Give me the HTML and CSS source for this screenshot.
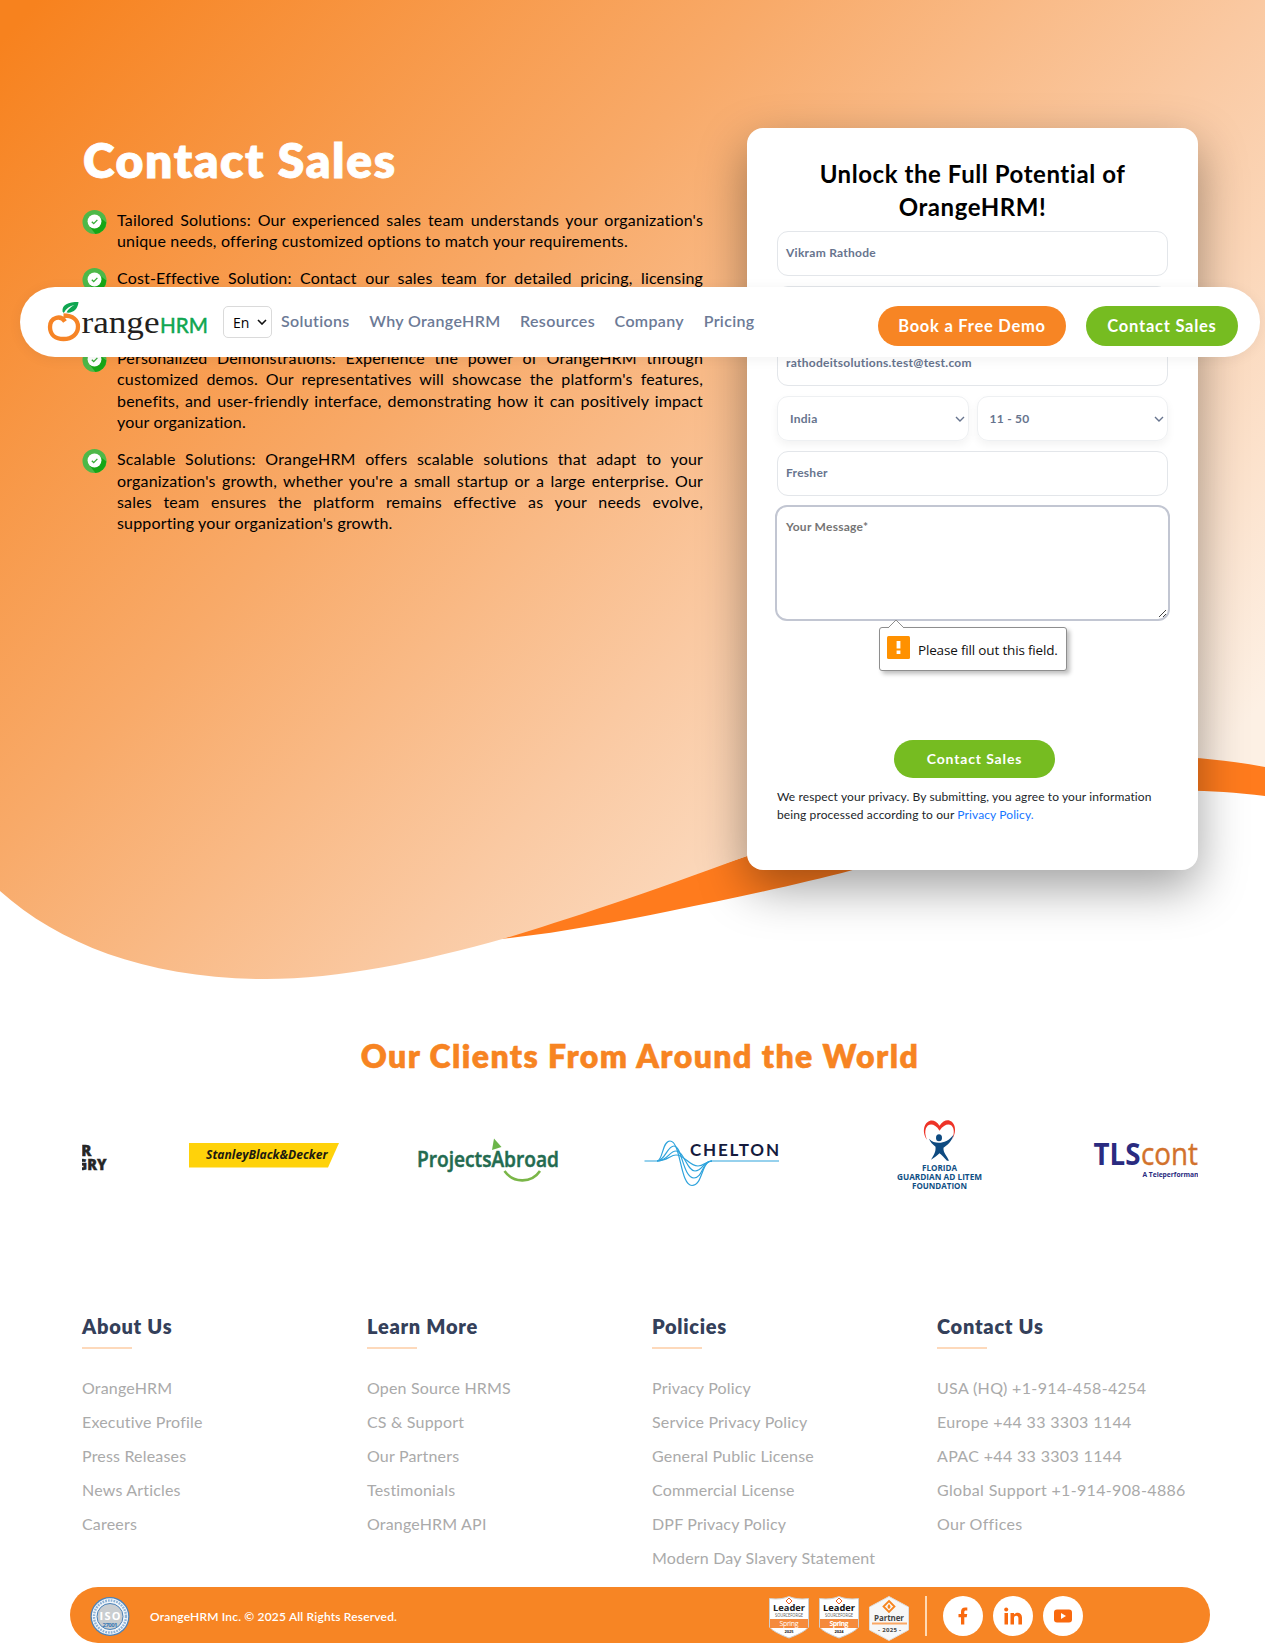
FILE: index.html
```html
<!DOCTYPE html>
<html lang="en">
<head>
<meta charset="utf-8">
<title>Contact Sales | OrangeHRM</title>
<link rel="stylesheet" href="styles.css">
</head>
<body>
<section class="hero">
  <svg class="hero-bg" viewBox="0 0 1265 985" aria-hidden="true">
    <defs>
      <linearGradient id="peach" gradientUnits="userSpaceOnUse" x1="0" y1="0" x2="1044" y2="945">
        <stop offset="0.02" stop-color="#f7821e"/><stop offset=".405" stop-color="#f8aa69"/>
        <stop offset=".666" stop-color="#fac9a2"/><stop offset="1" stop-color="#fdf0e4"/>
      </linearGradient>
    </defs>
    <path fill="#ff7b1d" d="M500 939C560 933 620 921 670 911C735 898 800 884 851 870.500C970 835 1080 772 1265 796V750H747V856Z"/>
    <path fill="url(#peach)" d="M0 0H1265V767C1100 736 960 776 747 856C650 892 560 922 506 938C420 962 340 979 266 979C150 979 60 945 0 891Z"/>
  </svg>
  <div class="hero-inner">
    <div class="pitch">
      <h1 class="pitch-title">Contact Sales</h1>
      <ul class="benefits">
        <li><svg class="tick" viewBox="0 0 26 26"><circle cx="13" cy="13" r="12.500" fill="#4db848"/><path d="M17 7L25.300 13.500A12.500 12.500 0 0 1 14 25.500L8 18Z" fill="#16a616"/><circle cx="13" cy="12.500" r="7.200" fill="#fff"/><path d="M10.200 12.700l2 2 3.800-3.900" fill="none" stroke="#35ad35" stroke-width="1.400"/></svg><p>Tailored Solutions: Our experienced sales team understands your organization's unique needs, offering customized options to match your requirements.</p></li>
        <li class="three-lines"><svg class="tick" viewBox="0 0 26 26"><circle cx="13" cy="13" r="12.500" fill="#4db848"/><path d="M17 7L25.300 13.500A12.500 12.500 0 0 1 14 25.500L8 18Z" fill="#16a616"/><circle cx="13" cy="12.500" r="7.200" fill="#fff"/><path d="M10.200 12.700l2 2 3.800-3.900" fill="none" stroke="#35ad35" stroke-width="1.400"/></svg><p>Cost-Effective Solution: Contact our sales team for detailed pricing, licensing</p></li>
        <li><svg class="tick" viewBox="0 0 26 26"><circle cx="13" cy="13" r="12.500" fill="#4db848"/><path d="M17 7L25.300 13.500A12.500 12.500 0 0 1 14 25.500L8 18Z" fill="#16a616"/><circle cx="13" cy="12.500" r="7.200" fill="#fff"/><path d="M10.200 12.700l2 2 3.800-3.900" fill="none" stroke="#35ad35" stroke-width="1.400"/></svg><p>Personalized Demonstrations: Experience the power of OrangeHRM through customized demos. Our representatives will showcase the platform's features, benefits, and user-friendly interface, demonstrating how it can positively impact your organization.</p></li>
        <li><svg class="tick" viewBox="0 0 26 26"><circle cx="13" cy="13" r="12.500" fill="#4db848"/><path d="M17 7L25.300 13.500A12.500 12.500 0 0 1 14 25.500L8 18Z" fill="#16a616"/><circle cx="13" cy="12.500" r="7.200" fill="#fff"/><path d="M10.200 12.700l2 2 3.800-3.900" fill="none" stroke="#35ad35" stroke-width="1.400"/></svg><p>Scalable Solutions: OrangeHRM offers scalable solutions that adapt to your organization's growth, whether you're a small startup or a large enterprise. Our sales team ensures the platform remains effective as your needs evolve, supporting your organization's growth.</p></li>
      </ul>
    </div>
    <form class="card">
      <h2 class="card-title">Unlock the Full Potential of<br>OrangeHRM!</h2>
      <div class="field"><span>Vikram Rathode</span></div>
      <div class="field"></div>
      <div class="field"><span>rathodeitsolutions.test@test.com</span></div>
      <div class="field-pair">
        <div class="field choice"><span>India</span><svg class="chev" viewBox="0 0 10 6"><path d="M1 1l4 4 4-4"/></svg></div>
        <div class="field choice"><span>11 - 50</span><svg class="chev" viewBox="0 0 10 6"><path d="M1 1l4 4 4-4"/></svg></div>
      </div>
      <div class="field"><span>Fresher</span></div>
      <div class="message"><span>Your Message*</span>
        <svg class="grip" viewBox="0 0 9 9"><path d="M1 8L8 1M5 8L8 5"/></svg>
        <div class="tip">
          <svg class="tip-arrow" viewBox="0 0 16 9"><path d="M0 9L8 1L16 9" fill="#fff" stroke="#8e8e8e"/></svg>
          <svg class="tip-icon" viewBox="0 0 23 23"><rect width="23" height="23" rx="1.500" fill="#ff9100"/><path d="M9.600 5h3.800v7.500H9.600zM9.600 14.500h3.800v3.500H9.600z" fill="#fff"/></svg>
          <span class="tip-text">Please fill out this field.</span>
        </div>
      </div>
      <button class="submit" type="button">Contact Sales</button>
      <p class="privacy">We respect your privacy. By submitting, you agree to your information<br>being processed according to our <a>Privacy Policy.</a></p>
    </form>
  </div>
</section>

<header class="nav">
  <svg class="brand" viewBox="0 0 162 42" role="img" aria-label="OrangeHRM">
    <path d="M18 20.500C13.500 13.500 3 16.500 3 26C3 34 9 38 16.500 38C25 38 31 33 31 25.500C31 19 26 14.500 16.500 14.500" fill="none" stroke="#f68426" stroke-width="4.300"/>
    <path d="M15.500 10.500C15 3.500 21 1 31.500 1C31 8 26 12.500 19.500 11.500C21 8.500 23.500 6 27.500 4C22.500 5 19 7.500 16.800 12Z" fill="#0fa651"/>
    <text x="34.500" y="31.800" class="brand-range" textLength="78" lengthAdjust="spacingAndGlyphs">range</text>
    <text x="113" y="31.800" class="brand-hrm" textLength="48" lengthAdjust="spacingAndGlyphs">HRM</text>
  </svg>
  <div class="lang"><span>En</span><svg class="chev dark" viewBox="0 0 10 6"><path d="M1 1l4 4 4-4"/></svg></div>
  <nav class="menu"><a>Solutions</a><a>Why OrangeHRM</a><a>Resources</a><a>Company</a><a>Pricing</a></nav>
  <div class="actions"><a class="pill orange">Book a Free Demo</a><a class="pill green">Contact Sales</a></div>
</header>

<section class="clients">
  <h2 class="clients-title">Our Clients From Around the World</h2>
  <svg class="logos" viewBox="82 1110 1116 90">
    <g fill="#262626" stroke="#262626" stroke-width=".4" font-family="Open Sans, sans-serif" font-weight="800" font-size="15">
      <text x="91.500" y="1156" text-anchor="end">FOR</text><text x="106.500" y="1170" text-anchor="end" textLength="64" lengthAdjust="spacingAndGlyphs">HUNGRY</text>
    </g>
    <path d="M189 1143H339L328 1167.500H189Z" fill="#ffd20a"/>
    <text x="206" y="1159" font-family="Open Sans, sans-serif" font-weight="700" font-style="italic" font-size="13" fill="#1d1a10" textLength="121.500" lengthAdjust="spacingAndGlyphs">StanleyBlack&amp;Decker</text>
    <text x="417" y="1167" font-family="Open Sans, sans-serif" font-weight="600" font-size="21.500" fill="#236b50" stroke="#236b50" stroke-width=".5" textLength="142" lengthAdjust="spacingAndGlyphs">ProjectsAbroad</text>
    <path d="M494 1138.500L501.500 1147L492 1150Z" fill="#6cb54a"/>
    <path d="M504.500 1171C513 1183 531 1184 540 1171" fill="none" stroke="#7ab648" stroke-width="2.600"/>
    <g fill="none" stroke="#2ea3dc" stroke-width="1.200">
      <path d="M644.500 1161H657C663 1161 662 1141 670 1141C681 1141 680 1185.500 692 1185.500C703 1185.500 701 1161 712 1161H779"/>
      <path d="M657 1161C665 1161 667 1146 674 1146C682 1146 683 1178 694 1178C703 1178 702 1161 712 1161"/>
      <path d="M657 1161C668 1161 669 1151 676 1151C684 1151 687 1171 695 1171C703 1171 703 1161 712 1161"/>
      <path d="M657 1161C668 1161 670 1155 676 1155C685 1155 689 1166 698 1166C704 1166 706 1161 712 1161"/>
    </g>
    <text x="690" y="1155.500" font-family="Lato, sans-serif" font-weight="700" font-size="17" fill="#151b3d" textLength="89">CHELTON</text>
    <g transform="translate(0 .7)">
      <path d="M927 1139C918 1126 931 1112 939.500 1125C948 1112 961 1124 952 1139C958 1125 948 1118 939.500 1130C932 1118 921 1125 927 1139Z" fill="#ee3327"/>
      <ellipse cx="939" cy="1137" rx="3" ry="3.500" fill="#0e4a80"/>
      <path d="M929 1138C932 1141 935 1142 939 1142C944 1142 949 1140 953.500 1134C952 1140 948 1144 943.500 1147C943 1152 947 1155 949 1160H947C944 1157 942 1154 939.500 1152.500C937 1155 934 1157 931 1159C934 1154 936 1151 935.500 1146C933 1144 930 1141 929 1138Z" fill="#0e4a80"/>
    </g>
    <g fill="#0f4f84" font-family="Open Sans, sans-serif" font-weight="700" font-size="9">
      <text x="922" y="1170.500" textLength="35" lengthAdjust="spacingAndGlyphs">FLORIDA</text>
      <text x="897" y="1179.500" textLength="85" lengthAdjust="spacingAndGlyphs">GUARDIAN AD LITEM</text>
      <text x="912" y="1188.500" textLength="55" lengthAdjust="spacingAndGlyphs">FOUNDATION</text>
    </g>
    <text x="1093.500" y="1165" font-family="Open Sans, sans-serif" font-weight="700" font-size="31" fill="#2a2b80" textLength="47" lengthAdjust="spacingAndGlyphs">TLS</text>
    <text x="1141" y="1165" font-family="Open Sans, sans-serif" font-weight="400" font-size="31" fill="#d2722c" stroke="#d2722c" stroke-width=".4" textLength="57" lengthAdjust="spacingAndGlyphs">cont</text>
    <text x="1142.500" y="1177" font-family="Open Sans, sans-serif" font-weight="700" font-size="6.800" fill="#2a2b80" textLength="56" lengthAdjust="spacingAndGlyphs">A Teleperforman</text>
  </svg>
</section>

<footer class="footer">
  <div class="cols">
    <div class="col"><h3>About Us</h3><a>OrangeHRM</a><a>Executive Profile</a><a>Press Releases</a><a>News Articles</a><a>Careers</a></div>
    <div class="col"><h3>Learn More</h3><a>Open Source HRMS</a><a>CS &amp; Support</a><a>Our Partners</a><a>Testimonials</a><a>OrangeHRM API</a></div>
    <div class="col"><h3>Policies</h3><a>Privacy Policy</a><a>Service Privacy Policy</a><a>General Public License</a><a>Commercial License</a><a>DPF Privacy Policy</a><a>Modern Day Slavery Statement</a></div>
    <div class="col phones"><h3>Contact Us</h3><a>USA (HQ) +1-914-458-4254</a><a>Europe +44 33 3303 1144</a><a>APAC +44 33 3303 1144</a><a>Global Support +1-914-908-4886</a><a>Our Offices</a></div>
  </div>
  <div class="legal">
    <svg class="iso" viewBox="0 0 40 41"><circle cx="20" cy="20.500" r="19.500" fill="#4a83bb"/><circle cx="20" cy="20.500" r="18.200" fill="#f2f6fa"/><circle cx="20" cy="20.500" r="16" fill="none" stroke="#8fb3d6" stroke-width="2.400" stroke-dasharray="1.800 1"/><circle cx="20" cy="20.500" r="13" fill="#c9cdd0" stroke="#4a83bb"/><text x="9.500" y="23.500" font-size="11" font-weight="700" fill="#fff" textLength="21">ISO</text><text x="12.500" y="31" font-size="6" font-weight="700" fill="#3c79b5" textLength="15">27001</text></svg>
    <span class="copy">OrangeHRM Inc. © 2025 All Rights Reserved.</span>
    <div class="badges">
      <svg viewBox="0 0 40 45"><path d="M.5 2.500Q12 4 20 .5Q28 4 39.500 2.500V31Q36 36 20 42Q4 36 .5 31Z" fill="#fff" stroke="#cfcfcf"/><path d="M1 23H39V32H1Z" fill="#f58a3c"/><path d="M20 2l3 3-3 3-3-3z" fill="none" stroke="#f26322"/><text x="4" y="15" font-size="9" font-weight="700" fill="#222" textLength="32" lengthAdjust="spacingAndGlyphs">Leader</text><text x="6" y="21" font-size="4.500" fill="#555" textLength="28" lengthAdjust="spacingAndGlyphs">SOURCEFORGE</text><text x="10.500" y="30" font-size="7" fill="#fff" textLength="19">Spring</text><text x="15.500" y="37" font-size="4" font-weight="700" fill="#222">2025</text></svg>
      <svg viewBox="0 0 40 45"><path d="M.5 2.500Q12 4 20 .5Q28 4 39.500 2.500V31Q36 36 20 42Q4 36 .5 31Z" fill="#fff" stroke="#cfcfcf"/><path d="M1 23H39V32H1Z" fill="#f58a3c"/><path d="M20 2l3 3-3 3-3-3z" fill="none" stroke="#f26322"/><text x="4" y="15" font-size="9" font-weight="700" fill="#111" textLength="32" lengthAdjust="spacingAndGlyphs">Leader</text><text x="6" y="21" font-size="4.500" fill="#555" textLength="28" lengthAdjust="spacingAndGlyphs">SOURCEFORGE</text><text x="10.500" y="30" font-size="7" font-weight="700" fill="#fff" textLength="19">Spring</text><text x="15.500" y="37" font-size="4" font-weight="700" fill="#111">2024</text></svg>
      <svg viewBox="0 0 40 45"><path d="M20 .5L39.500 11V34L20 44.500L.5 34V11Z" fill="#f7f7f7" stroke="#ddd"/><path d="M20 5l5.500 5.500-5.500 5.500-5.500-5.500z" fill="none" stroke="#f7851f" stroke-width="1.800"/><path d="M20 8q3 3 0 5q-3-2 0-5" fill="#f7851f"/><path d="M3 27.500H38" stroke="#fba864" stroke-width="2"/><text x="5" y="25" font-size="8" font-weight="700" fill="#444" textLength="30">Partner</text><text x="9" y="36" font-size="6" font-weight="700" fill="#444" textLength="23">- 2025 -</text></svg>
    </div>
    <i class="rule"></i>
    <div class="social">
      <svg viewBox="0 0 40 40"><circle cx="20" cy="20" r="20" fill="#fff"/><path d="M18 28.500V21.300H15.500V18H18V15.800C18 13 19.600 11.500 22.200 11.500H24.300V14.600H22.800C21.700 14.600 21.300 15.200 21.300 16.200V18H24.200L23.700 21.300H21.300V28.500Z" fill="#f9690e"/></svg>
      <svg viewBox="0 0 40 40"><circle cx="20" cy="20" r="20" fill="#fff"/><path d="M11.500 17H15V28.500H11.500ZM17.500 17H21V18.600C23.500 15.500 29 16.500 29 21.500V28.500H25.400V22.200C25.400 19 21 19 21 22.200V28.500H17.500Z" fill="#f9690e"/><circle cx="13.200" cy="13.500" r="2" fill="#f9690e"/></svg>
      <svg viewBox="0 0 40 40"><circle cx="20" cy="20" r="20" fill="#fff"/><rect x="11" y="13.500" width="18" height="13" rx="3" fill="#f9690e"/><path d="M18 17l5 3-5 3z" fill="#fff"/></svg>
    </div>
  </div>
</footer>
</body>
</html>
```
FILE: styles.css
```css
* { box-sizing: border-box; }
body { margin: 0; width: 1265px; height: 1650px; position: relative; overflow: hidden; background: #fff; font-family: Lato, "Open Sans", sans-serif; color: #000; }
h1, h2, h3, p, ul { margin: 0; padding: 0; }
.hero { position: relative; height: 985px; padding: 128px 67px 0 82px; }
.hero-bg { position: absolute; inset: 0; width: 1265px; height: 985px; }
.hero-inner { position: relative; display: flex; justify-content: space-between; }
.pitch { width: 621px; padding-top: 3px; }
.pitch-title { color: #fff; font-size: 48px; line-height: 58px; font-weight: 800; letter-spacing: 1.6px; padding-left: 1px; -webkit-text-stroke: .8px #fff; }
.benefits { list-style: none; margin-top: 19.500px; }
.benefits li { display: flex; gap: 10px; margin-bottom: 16px; }
.benefits p { width: 586px; font-size: 16px; line-height: 21.300px; letter-spacing: .17px; text-align: justify; }
.three-lines { height: 64px; }
.three-lines p { text-align-last: justify; }
.tick { flex: none; width: 25px; height: 26px; }
.card { width: 451px; height: 742px; padding: 29px 30px 0; background: #fff; border-radius: 16px; box-shadow: 0 18px 48px rgba(0, 0, 0, .37); }
.card-title { text-align: center; font-size: 24px; line-height: 33px; font-weight: 700; letter-spacing: .56px; margin-bottom: 8px; }
.field { display: flex; align-items: center; height: 45px; margin-bottom: 10px; padding: 0 9px 2px 8px; border: 1px solid #e3e6ea; border-radius: 11px; font-size: 12px; font-weight: 700; letter-spacing: .27px; color: #67748e; }
.field-pair { display: grid; grid-template-columns: 1fr 1fr; gap: 8px; }
.choice { justify-content: space-between; padding: 0 3px 0 12px; border-color: #eef0f2; box-shadow: 0 4px 8px rgba(0, 0, 0, .05); }
.chev { width: 10px; height: 6px; fill: none; stroke: #67748e; stroke-width: 1.400; }
.chev.dark { stroke: #111; stroke-width: 1.600; }
.message { position: relative; width: 395px; height: 116px; margin: -1px -2px 0; padding: 12px 9px; border: 2px solid #c2c6d2; border-radius: 12px; font-size: 12px; font-weight: 700; letter-spacing: .27px; line-height: 16px; color: #757575; }
.grip { position: absolute; right: 1px; bottom: 1px; width: 9px; height: 9px; stroke: #444; fill: none; }
.tip { position: absolute; left: 102px; top: 120px; width: 188px; height: 44px; display: flex; align-items: center; gap: 8px; padding: 0 7px; background: #fff; border: 1px solid #8e8e8e; border-radius: 3px; box-shadow: 3px 3px 4px rgba(0, 0, 0, .25); }
.tip-arrow { position: absolute; left: 8px; top: -9px; width: 16px; height: 9px; }
.tip-icon { flex: none; width: 23px; height: 23px; margin-top: -4px; }
.tip-text { font: 13.500px/20px "Open Sans", sans-serif; letter-spacing: -.17px; color: #111; white-space: nowrap; padding-top: 2px; }
.submit { display: flex; align-items: center; justify-content: center; width: 161px; height: 38px; margin: 119px 0 0 117px; padding: 0 0 2px; border: 0; border-radius: 19px; background: #76bc21; color: #fff; font: 700 14px Lato, sans-serif; letter-spacing: .85px; }
.privacy { margin-top: 10px; font-size: 12px; line-height: 18px; letter-spacing: .11px; color: #212529; white-space: nowrap; }
.privacy a { color: #1676ff; }
.nav { position: absolute; left: 20px; top: 287px; width: 1240px; height: 70px; display: flex; align-items: flex-start; padding: 0 22px 0 27px; background: #fff; border-radius: 35px; box-shadow: 0 2px 14px rgba(0, 0, 0, .06); }
.brand { width: 162px; height: 42px; margin-top: 14px; overflow: visible; }
.brand-range { font: 400 32px "Liberation Serif", serif; fill: #231f20; }
.brand-hrm { font: 400 22px Lato, sans-serif; fill: #0fa651; stroke: #0fa651; stroke-width: .5; }
.lang { display: flex; align-items: center; justify-content: space-between; width: 49px; height: 32px; margin: 19px 9px 0 14px; padding: 0 4px 0 9px; border: 1px solid #dadada; border-radius: 5px; font: 14px "Open Sans", sans-serif; }
.menu { display: flex; gap: 19.600px; margin-top: 24px; font-size: 16px; line-height: 20px; font-weight: 600; letter-spacing: .34px; color: #6c7a96; white-space: nowrap; }
.actions { display: flex; gap: 20px; margin: 19px 0 0 auto; }
.pill { display: flex; align-items: center; justify-content: center; height: 40px; border-radius: 20px; color: #fff; font-size: 16.500px; font-weight: 700; letter-spacing: .75px; }
.orange { width: 188px; background: #f78524; }
.green { width: 152px; background: #76bc21; }
.clients { padding: 51px 67px 0 82px; }
.clients-title { text-align: center; color: #f78422; font-size: 32px; line-height: 40px; font-weight: 800; letter-spacing: 1.43px; -webkit-text-stroke: .5px #f78422; }
.logos { display: block; width: 1116px; height: 90px; margin-top: 34px; }
.footer { padding: 113px 55px 0 70px; }
.cols { display: grid; grid-template-columns: repeat(4, 285px); padding-left: 12px; height: 273.500px; }
.col { display: flex; flex-direction: column; white-space: nowrap; }
.col h3 { font-size: 20px; line-height: 26px; font-weight: 800; letter-spacing: .72px; color: #34405a; margin-bottom: 22px; }
.col h3::after { content: ""; display: block; width: 50px; height: 2px; margin-top: 8px; background: #fdd9bb; }
.col a { font-size: 16px; line-height: 34px; letter-spacing: .18px; color: #aaa; }
.phones a { letter-spacing: .34px; }
.legal { display: flex; align-items: center; width: 1140px; height: 56.500px; padding: 3px 0 0 20px; border-radius: 28.500px; background: #f78524; }
.iso { width: 40px; height: 41px; }
.copy { margin-left: 20px; font-size: 12px; font-weight: 600; letter-spacing: .17px; color: #fff; }
.legal text { font-family: "Open Sans", sans-serif; }
.badges { display: flex; gap: 10px; margin: 4px 0 0 auto; }
.badges svg { width: 40px; height: 45px; }
.rule { width: 2px; height: 40px; margin: 0 16px; background: #ffd9b3; }
.social { display: flex; gap: 10px; margin-right: 127px; }
.social svg { width: 40px; height: 40px; }
```
